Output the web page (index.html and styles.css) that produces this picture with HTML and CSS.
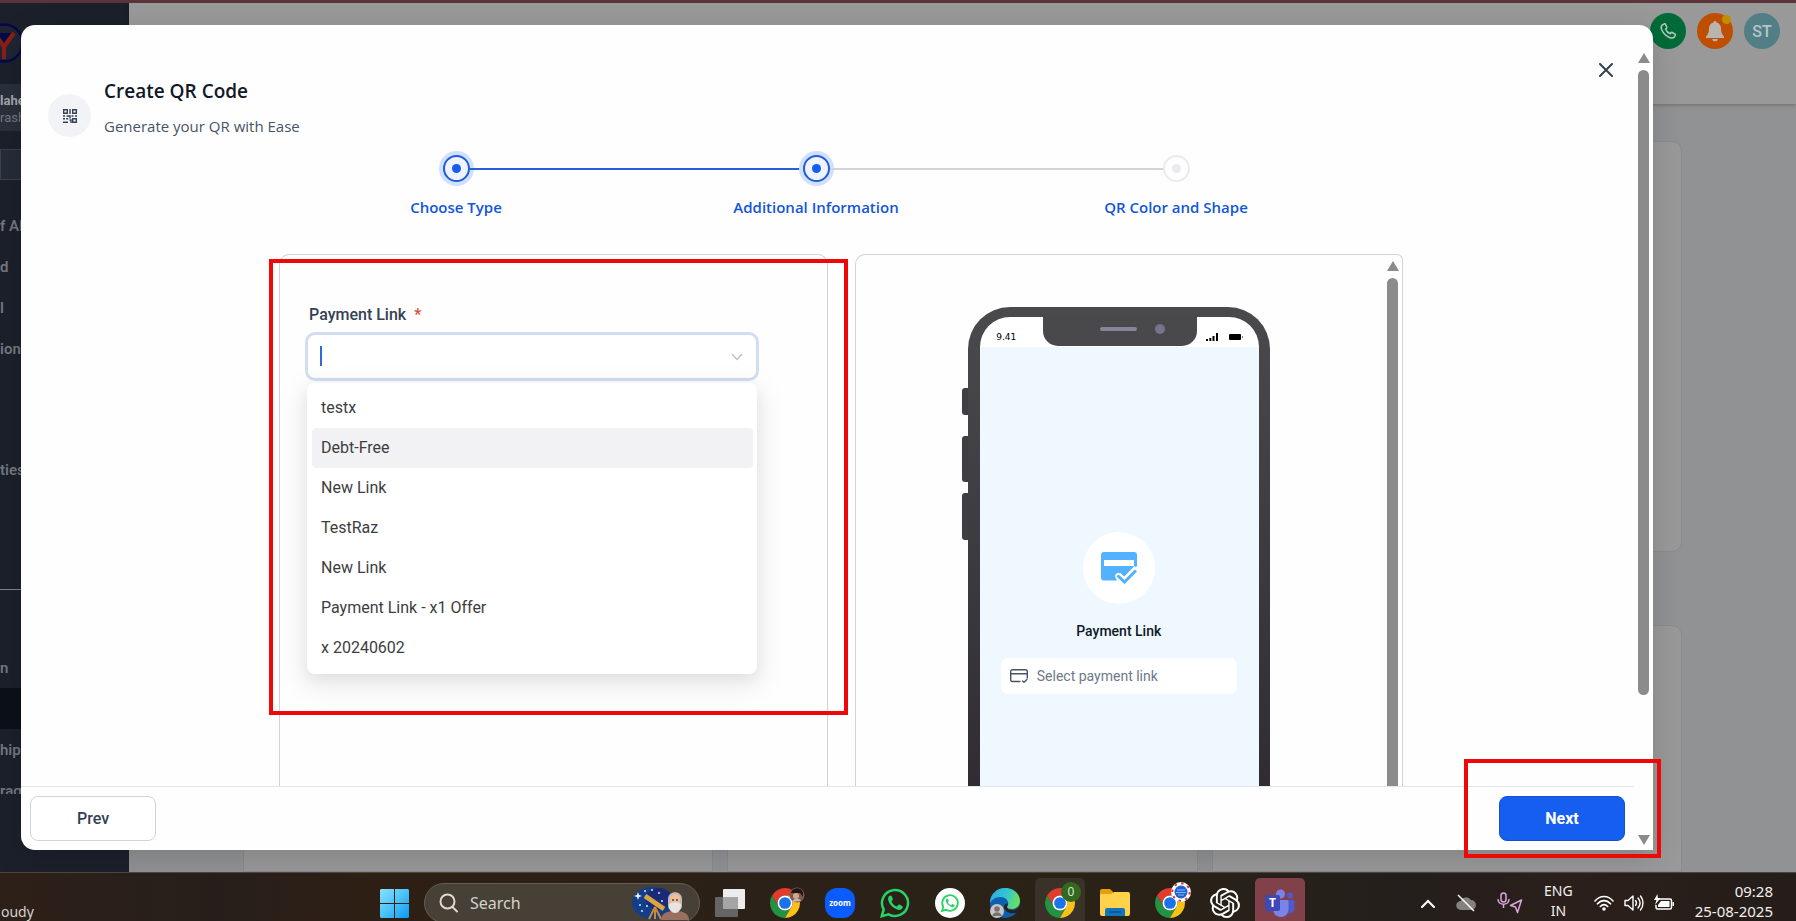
FILE: index.html
```html
<!DOCTYPE html>
<html lang="en">
<head>
    <meta charset="UTF-8">
    <meta name="viewport" content="width=device-width, initial-scale=1.0">
    <title>Create QR Code</title>
    <link rel="stylesheet" href="styles.css">
</head>
<body>

    <!-- shared icon -->
    <svg class="sprite" aria-hidden="true">
        <symbol id="chrome" viewBox="2 2 44 44">
            <path fill="#e33b2e" d="M4.95 13A22 22 0 0 1 43.05 13H24a11 11 0 0 0-9.5 16.5z"/>
            <path fill="#229342" d="M4.95 13A22 22 0 0 0 24 46l9.5-16.5a11 11 0 0 1-19 0z"/>
            <path fill="#fbc116" d="M43.05 13A22 22 0 0 1 24 46l9.5-16.5A11 11 0 0 0 24 13z"/>
            <circle cx="24" cy="24" r="11" fill="#fff"/>
            <circle cx="24" cy="24" r="8.6" fill="#1a73e8"/>
        </symbol>
    </svg>

    <div class="app">
        <aside class="sidebar">
            <svg class="sidebar-logo" viewBox="0 0 40 40" aria-hidden="true">
                <circle cx="20" cy="20" r="18.500" fill="#1f2532" stroke="#05094a" stroke-width="2.500"/>
                <path d="M13 10h14l-7 9z" fill="#05094a"/>
                <path d="M10 10l10 14L30 10M20 23v13" fill="none" stroke="#8c1d18" stroke-width="4"/>
            </svg>
            <div class="account">
                <strong>lahe</strong>
                <span>rash</span>
            </div>
            <div class="sidebar-search"></div>
            <ul class="menu">
                <li><a href="#">f AI</a></li>
                <li><a href="#">d</a></li>
                <li><a href="#">l</a></li>
                <li><a href="#">ions</a></li>
                <li class="spaced"><a href="#">ties</a></li>
            </ul>
            <ul class="menu menu-bottom">
                <li><a href="#">n</a></li>
                <li class="active"></li>
                <li><a href="#">hips</a></li>
                <li class="cut"><a href="#">rag</a></li>
            </ul>
        </aside>

        <main class="main">
            <div class="topbar">
                <button class="round green" aria-label="Call">
                    <svg width="20" height="20" viewBox="0 0 24 24" fill="none" stroke="#b4cdbf" stroke-width="1.800" stroke-linejoin="round"><path d="M7.500 3.500 5 5c-1.500 1-1.500 3-.500 5.500C6.500 15 10 18.500 14.500 20c2 .7 4 .5 5-.700l1.300-2.100c.3-.6.1-1.200-.4-1.500l-3.300-1.900c-.6-.3-1.200-.2-1.500.3l-.9 1.200c-2.600-.9-4.700-3.200-5.700-5.700l1.200-.9c.5-.4.600-1 .3-1.500L8.900 3.900c-.300-.500-.900-.7-1.400-.4z"/></svg>
                </button>
                <button class="round orange" aria-label="Notifications">
                    <svg width="20" height="22" viewBox="0 0 20 22" fill="#b9b4b0"><path d="M10 1c.9 0 1.500.6 1.500 1.500C14.500 3.200 16 5.500 16 8.500c0 4 1 6 3 8v1.500H1v-1.500c2-2 3-4 3-8 0-3 1.500-5.300 4.500-6C8.500 1.600 9.100 1 10 1zM7.300 19h5.400a2.700 2.300 0 0 1-5.400 0z"/></svg>
                    <span class="dot"></span>
                </button>
                <button class="round teal">ST</button>
            </div>
            <div class="page">
                <div class="tile wide"></div>
                <div class="tile"></div>
                <div class="tile"></div>
                <div class="tile"></div>
            </div>
        </main>

        <div class="overlay">
            <div class="modal" role="dialog" aria-labelledby="modal-title">
                <div class="modal-main">
                    <div class="modal-body">
                        <div class="modal-header">
                            <span class="qr-icon">
                                <svg width="14" height="14" viewBox="0 0 14 14" fill="none" stroke="#344054" stroke-width="1.400"><path d="M.7.7h3.600v3.600H.7zM9.700.7h3.600v3.600H9.700zM9.700 9.700h3.600v3.600H9.700zM7 0v5M0 7h2M3.500 7H7v2.500M8.500 7h2M12 7h2M0 9.700h2M3.200 9.700h2M0 13.300h5M6.500 11h1.500v3"/></svg>
                            </span>
                            <div class="modal-titles">
                                <h2 id="modal-title">Create QR Code</h2>
                                <p>Generate your QR with Ease</p>
                            </div>
                            <button class="close" aria-label="Close">
                                <svg width="14" height="14" viewBox="0 0 14 14" stroke="#344054" stroke-width="2" stroke-linecap="round"><path d="M1 1l12 12M13 1L1 13"/></svg>
                            </button>
                        </div>

                        <ol class="stepper">
                            <li class="step done">
                                <div class="step-rail"><i class="line"></i><span class="node"></span><i class="line"></i></div>
                                <span class="step-label">Choose Type</span>
                            </li>
                            <li class="step current">
                                <div class="step-rail"><i class="line"></i><span class="node"></span><i class="line"></i></div>
                                <span class="step-label">Additional Information</span>
                            </li>
                            <li class="step">
                                <div class="step-rail"><i class="line"></i><span class="node"></span><i class="line"></i></div>
                                <span class="step-label">QR Color and Shape</span>
                            </li>
                        </ol>

                        <div class="panels">
                            <form class="panel form-panel">
                                <label for="paymentLink">Payment Link <span class="required">*</span></label>
                                <div class="combo">
                                    <input type="text" id="paymentLink" role="combobox" aria-expanded="true" aria-controls="paymentOptions" autocomplete="off">
                                    <span class="caret"></span>
                                    <svg class="chevron" width="12" height="8" viewBox="0 0 12 8" fill="none" stroke="#bfbfbf" stroke-width="1.300"><path d="M1 1l5 5.500L11 1"/></svg>
                                    <select class="options" id="paymentOptions" size="7" aria-label="Payment links">
                                        <option>testx</option>
                                        <option selected>Debt-Free</option>
                                        <option>New Link</option>
                                        <option>TestRaz</option>
                                        <option>New Link</option>
                                        <option>Payment Link - x1 Offer</option>
                                        <option>x 20240602</option>
                                    </select>
                                </div>
                                <div class="mark mark-form"></div>
                            </form>

                            <div class="panel preview-panel">
                                <div class="preview">
                                    <div class="phone">
                                        <i class="side-key key-1"></i>
                                        <i class="side-key key-2"></i>
                                        <i class="side-key key-3"></i>
                                        <div class="screen">
                                            <div class="status-bar">
                                                <span class="phone-time">9.41</span>
                                                <div class="notch">
                                                    <i class="speaker"></i>
                                                    <i class="camera"></i>
                                                </div>
                                                <svg class="phone-status" width="38" height="10" viewBox="0 0 38 10"><path d="M1 7h2v2H1zM4.300 6h2v3h-2zM7.500 4h2v5h-2zM11 1h2v8h-2z"/><rect x="24" y="2" width="12" height="6" rx="1"/><path d="M37 4h1v2h-1z" fill="#777"/></svg>
                                            </div>
                                            <div class="screen-body">
                                                <span class="pay-icon">
                                                    <svg width="36" height="32" viewBox="0 0 36 32"><path fill="#53b1fd" d="M3 0h30a3 3 0 0 1 3 3v11l-12.500 12-4-4.200c-1.500-1.400-4-1-5 .700-.8 1.400-.4 2.800.5 3.800l1.200 2.200H3a3 3 0 0 1-3-3V3a3 3 0 0 1 3-3z"/><path fill="#fff" d="M3 8h30v6H3z"/><path fill="none" stroke="#fff" stroke-width="7" d="M17 23.500l6.500 6L36 16.500"/><path fill="none" stroke="#53b1fd" stroke-width="3" d="M16.500 23.500l7 6.500L35 18.500"/></svg>
                                                </span>
                                                <h3>Payment Link</h3>
                                                <div class="pay-field">
                                                    <svg width="18" height="14" viewBox="0 0 18 14" fill="none" stroke="#475467" stroke-width="1.400" stroke-linecap="round" stroke-linejoin="round"><path d="M10 12.500H2.500A1.800 1.800 0 0 1 .7 10.700V2.500A1.800 1.800 0 0 1 2.500.7h13a1.800 1.800 0 0 1 1.800 1.800V9M.7 4.700h16.600M12.500 12l1.500 1.300 3-2.700"/></svg>
                                                    <span>Select payment link</span>
                                                </div>
                                            </div>
                                        </div>
                                    </div>
                                </div>
                                <div class="scrollbar inner-scroll" aria-hidden="true">
                                    <i class="arrow up"></i>
                                    <i class="thumb"></i>
                                </div>
                            </div>
                        </div>
                    </div>

                    <div class="modal-footer">
                        <button class="btn">Prev</button>
                        <button class="btn btn-primary">Next</button>
                    </div>
                </div>

                <div class="scrollbar" aria-hidden="true">
                    <i class="arrow up"></i>
                    <i class="thumb"></i>
                    <i class="arrow down"></i>
                </div>
                <div class="mark mark-next"></div>
            </div>
        </div>
    </div>

    <div class="taskbar">
        <div class="taskbar-inner">
            <div class="weather">oudy</div>
            <div class="apps">
                <button class="task" aria-label="Start">
                    <svg width="29" height="29" viewBox="0 0 29 29">
                        <defs><linearGradient id="win" x1="0" y1="0" x2="1" y2="1"><stop offset="0" stop-color="#8be0fc"/><stop offset=".5" stop-color="#4cc3f8"/><stop offset="1" stop-color="#0a98f3"/></linearGradient></defs>
                        <path fill="url(#win)" d="M1 0h13v14H0V1zM15 0h13l1 1v13H15zM0 15h14v14H1l-1-1zM15 15h14v13l-1 1H15z"/>
                    </svg>
                </button>
                <div class="search">
                    <svg width="20" height="20" viewBox="0 0 20 20" fill="none" stroke="#dcd9d5" stroke-width="2" stroke-linecap="round"><circle cx="8.500" cy="8.500" r="7"/><path d="M13.500 14l4.500 4.500"/></svg>
                    <input type="text" placeholder="Search" aria-label="Search">
                    <svg width="60" height="34" viewBox="0 0 60 34">
                        <ellipse cx="21" cy="17" rx="20" ry="16" fill="#143d8a"/>
                        <ellipse cx="28" cy="13" rx="13" ry="11" fill="#182a78"/>
                        <path d="M7 6l1 3 3 1-3 1-1 3-1-3-3-1 3-1z" fill="#fff"/>
                        <g fill="#cfe4ff"><circle cx="14" cy="5" r="1"/><circle cx="21" cy="4" r="1"/><circle cx="9" cy="19" r="1"/><circle cx="16" cy="20" r="1"/><circle cx="28" cy="7" r="1"/><circle cx="11" cy="25" r="1"/><circle cx="31" cy="15" r="1"/></g>
                        <path d="M14 10l19 13" stroke="#d9a540" stroke-width="5"/>
                        <path d="M24 21l-6 12M24 21v12M24 21l6 12" stroke="#c88a2c" stroke-width="2"/>
                        <path d="M30 34c0-6 5-9 14-9s14 3 14 9z" fill="#9a6f61"/>
                        <path d="M37 13c0-9 14-9 14 0v7c0 7-14 7-14 0z" fill="#bdbab8"/>
                        <path d="M39 11c2-4 8-4 10 0v8H39z" fill="#eebd9c"/>
                        <path d="M41 14h2M45 14h2" stroke="#5b4136" stroke-width="1.500"/>
                        <path d="M38 18c3-2 9-2 12 0 1 12-13 12-12 0z" fill="#e6e3e1"/>
                    </svg>
                </div>
                <button class="task" aria-label="Task view">
                    <svg width="30" height="28" viewBox="0 0 30 28"><rect x="8" width="22" height="20" rx="1" fill="#ececec"/><rect y="8" width="23" height="20" rx="1" fill="#777" opacity=".8"/><path d="M8 8h15v12H8z" fill="#a5a5a5"/></svg>
                </button>
                <button class="task" aria-label="Chrome">
                    <svg width="30" height="30"><use href="#chrome"/></svg>
                    <svg class="badge-icon low" width="16" height="16" viewBox="0 0 16 16"><circle cx="8" cy="8" r="7.500" fill="#7b5b50"/><path d="M2 6c1-5 9-7 12-1v5l-3-4z" fill="#231716"/><circle cx="7" cy="9" r="3" fill="#d7a48e"/><path d="M3 15c1-4 8-4 9-1z" fill="#c7b8b5"/></svg>
                </button>
                <button class="task" aria-label="Zoom">
                    <svg width="30" height="30" viewBox="0 0 30 30"><rect width="30" height="30" rx="12" fill="#0b5cff"/><text x="15" y="18" text-anchor="middle" font-size="8" font-weight="700" fill="#fff">zoom</text></svg>
                </button>
                <button class="task" aria-label="WhatsApp">
                    <svg width="30" height="30" viewBox="0 0 30 30"><path fill="none" stroke="#25d366" stroke-width="2.500" d="M1.800 28.200l1.900-6.800A13 13 0 1 1 8.600 26.300z"/><path fill="#25d366" d="M10.800 7.600c-.9-.3-2.600.9-2.700 3-.2 4.900 5.900 11 11 11.300 2 .1 3.700-1.400 3.700-3 0-.8-3.400-2.500-4.100-2.300-.7.300-1.300 2-2 1.900-2.100-.6-4.600-3-5.200-4.900 0-.7 1.400-1.400 1.400-2.100 0-.8-1.200-3.600-2.100-3.900z"/></svg>
                </button>
                <button class="task" aria-label="WhatsApp Web">
                    <svg width="30" height="30" viewBox="0 0 30 30"><circle cx="15" cy="15" r="15" fill="#fff"/><g transform="translate(6 6) scale(.6)"><path fill="none" stroke="#25d366" stroke-width="3" d="M1.800 28.200l1.900-6.800A13 13 0 1 1 8.600 26.300z"/><path fill="#25d366" d="M10.800 7.600c-.9-.3-2.600.9-2.700 3-.2 4.900 5.900 11 11 11.300 2 .1 3.700-1.400 3.700-3 0-.8-3.400-2.500-4.100-2.300-.7.300-1.300 2-2 1.900-2.100-.6-4.600-3-5.200-4.900 0-.7 1.400-1.400 1.400-2.100 0-.8-1.200-3.600-2.100-3.900z"/></g></svg>
                </button>
                <button class="task" aria-label="Edge">
                    <svg width="30" height="30" viewBox="0 0 30 30">
                        <defs><linearGradient id="edge" x1="0" y1="0" x2="1" y2=".3"><stop offset="0" stop-color="#2aa7e8"/><stop offset=".6" stop-color="#35c6d0"/><stop offset="1" stop-color="#66dd63"/></linearGradient></defs>
                        <circle cx="15" cy="15" r="15" fill="#0f5fb0"/>
                        <path fill="url(#edge)" d="M0 15C0 6 7 0 15 0c9 0 15 6 15 13 0 5-4 8-8 8-3 0-5-1-5-2s2-2 1-5c-1-4-5-5-8-5-5 0-8 3-10 6z"/>
                        <path fill="#2b2217" d="M17 19c0 2 3 3.500 6.500 3 2.500-.4 4-1.500 5.300-3l1.200-2v8l-3-.5c-5 2-13 0-13-6 0-2 2-3 4-3 0 1.500-1 2.500-1 3.500z"/>
                        <circle cx="7" cy="23" r="7" fill="#c9c7c6"/><circle cx="7" cy="21" r="2.800" fill="#77716f"/><path d="M2.500 28c0-5 9-5 9 0z" fill="#77716f"/>
                    </svg>
                </button>
                <button class="task task-open" aria-label="Chrome, work profile">
                    <svg width="30" height="30"><use href="#chrome"/></svg>
                    <svg class="badge-icon" width="20" height="20" viewBox="0 0 20 20"><circle cx="10" cy="10" r="10" fill="#33691e"/><text x="10" y="14" text-anchor="middle" font-size="12" fill="#d7e3d0">0</text></svg>
                </button>
                <button class="task" aria-label="File Explorer">
                    <svg width="30" height="28" viewBox="0 0 30 28"><path fill="#e3a008" d="M0 2a2 2 0 0 1 2-2h8l3 3v6H0z"/><path fill="#ffd24a" d="M0 5h11l3-2h14a2 2 0 0 1 2 2v20a2 2 0 0 1-2 2H2a2 2 0 0 1-2-2z"/><path fill="#1274bd" d="M5 27v-6a2 2 0 0 1 2-2h16a2 2 0 0 1 2 2v6z"/><path d="M9 23h12" stroke="#0b4f8c" stroke-width="1.500"/></svg>
                </button>
                <button class="task" aria-label="Chrome, personal profile">
                    <svg width="30" height="30"><use href="#chrome"/></svg>
                    <svg class="badge-icon" width="20" height="20" viewBox="0 0 20 20"><circle cx="10" cy="10" r="10" fill="#fff"/><circle cx="10" cy="10" r="8.700" fill="none" stroke="#d63a3a" stroke-width="2" stroke-dasharray="2.500 4.300"/><circle cx="10" cy="10" r="6.500" fill="#1d62d1"/><path d="M6 8h8M5 10.500h10M7 13h6" stroke="#8fb8f2"/></svg>
                </button>
                <button class="task" aria-label="ChatGPT">
                    <svg width="30" height="30" viewBox="0 0 24 24" fill="#fff"><path d="M22.2819 9.8211a5.9847 5.9847 0 0 0-.5157-4.9108 6.0462 6.0462 0 0 0-6.5098-2.9A6.0651 6.0651 0 0 0 4.9807 4.1818a5.9847 5.9847 0 0 0-3.9977 2.9 6.0462 6.0462 0 0 0 .7427 7.0966 5.98 5.98 0 0 0 .511 4.9107 6.051 6.051 0 0 0 6.5146 2.9001A5.9847 5.9847 0 0 0 13.2599 24a6.0557 6.0557 0 0 0 5.7718-4.2058 5.9894 5.9894 0 0 0 3.9977-2.9001 6.0557 6.0557 0 0 0-.7475-7.0729zm-9.022 12.6081a4.4755 4.4755 0 0 1-2.8764-1.0408l.1419-.0804 4.7783-2.7582a.7948.7948 0 0 0 .3927-.6813v-6.7369l2.02 1.1686a.071.071 0 0 1 .038.052v5.5826a4.504 4.504 0 0 1-4.4945 4.4944zm-9.6607-4.1254a4.4708 4.4708 0 0 1-.5346-3.0137l.142.0852 4.783 2.7582a.7712.7712 0 0 0 .7806 0l5.8428-3.3685v2.3324a.0804.0804 0 0 1-.0332.0615L9.74 19.9502a4.4992 4.4992 0 0 1-6.1408-1.6464zM2.3408 7.8956a4.485 4.485 0 0 1 2.3655-1.9728V11.6a.7664.7664 0 0 0 .3879.6765l5.8144 3.3543-2.0201 1.1685a.0757.0757 0 0 1-.071 0l-4.8303-2.7865A4.504 4.504 0 0 1 2.3408 7.872zm16.5963 3.8558L13.1038 8.364 15.1192 7.2a.0757.0757 0 0 1 .071 0l4.8303 2.7913a4.4944 4.4944 0 0 1-.6765 8.1042v-5.6772a.79.79 0 0 0-.407-.667zm2.0107-3.0231l-.142-.0852-4.7735-2.7818a.7759.7759 0 0 0-.7854 0L9.409 9.2297V6.8974a.0662.0662 0 0 1 .0284-.0615l4.8303-2.7866a4.4992 4.4992 0 0 1 6.6802 4.66zM8.3065 12.863l-2.02-1.1638a.0804.0804 0 0 1-.038-.0567V6.0742a4.4992 4.4992 0 0 1 7.3757-3.4537l-.142.0805L8.704 5.459a.7948.7948 0 0 0-.3927.6813zm1.0976-2.3654l2.602-1.4998 2.6069 1.4998v2.9994l-2.5974 1.4997-2.6067-1.4997Z"/></svg>
                </button>
                <button class="task task-alert" aria-label="Teams">
                    <svg width="30" height="28" viewBox="0 0 30 28"><circle cx="15.500" cy="5" r="4.500" fill="#7b83eb"/><circle cx="25" cy="6.500" r="3" fill="#5059c9"/><path fill="#5059c9" d="M20 11h8a1.500 1.500 0 0 1 1.500 1.500V19c0 4-3 6-6.500 5.500z"/><path fill="#7b83eb" d="M9 11h13a1.500 1.500 0 0 1 1.500 1.500V20c0 5-3.500 8-7.500 8s-8-3-8-8z"/><rect y="6" width="15" height="16" rx="2" fill="#4048b4"/><text x="7.500" y="18" text-anchor="middle" font-size="12" font-weight="700" fill="#fff">T</text></svg>
                </button>
            </div>

            <div class="tray">
                <svg width="14" height="9" viewBox="0 0 14 9" fill="none" stroke="#fff" stroke-width="2" stroke-linecap="round"><path d="M1 8l6-6 6 6"/></svg>
                <svg width="20" height="18" viewBox="0 0 20 18"><path fill="#85817e" d="M5 16a4.500 4.500 0 0 1-.5-9A6 6 0 0 1 15 6a5 5 0 0 1 0 10z"/><path d="M2 1l16 16" stroke="#fff" stroke-width="1.500"/></svg>
                <svg width="26" height="22" viewBox="0 0 26 22" fill="none" stroke="#d9a5dc" stroke-width="1.500" stroke-linejoin="round"><rect x="4" y="1" width="5" height="9" rx="2.500"/><path d="M1 7c0 7 11 7 11 0M6.500 12.500V16M24.500 8l-11 5.500 5 1.500 2 5.500z"/></svg>
                <div class="lang">ENG<br>IN</div>
                <div class="status-icons">
                    <svg width="20" height="16" viewBox="0 0 20 16" fill="none" stroke="#fff" stroke-width="1.600" stroke-linecap="round"><path d="M1 6c5-6 13-6 18 0M3.500 8.800c4-4.300 9-4.300 13 0M6.300 11.500c2.500-2.500 5-2.500 7.400 0"/><circle cx="10" cy="14" r="1" fill="#fff"/></svg>
                    <svg width="20" height="18" viewBox="0 0 20 18" fill="none" stroke="#fff" stroke-width="1.400" stroke-linecap="round" stroke-linejoin="round"><path d="M1 6.500h3l5-4.500v14l-5-4.500H1zM11.500 6.500c1.200 1.500 1.200 3.500 0 5M14 4c2.500 3 2.500 7 0 10M16.500 2c3.300 4 3.300 10 0 14"/></svg>
                    <svg width="20" height="18" viewBox="0 0 20 18"><path d="M5 5h11a1.500 1.500 0 0 1 1.500 1.500v7A1.500 1.500 0 0 1 16 15H3.500A1.500 1.500 0 0 1 2 13.500V11" fill="none" stroke="#fff" stroke-width="1.500"/><path fill="#fff" d="M7 7h8.500v6H4v-2zM18.500 8h1.500v4h-1.500zM3.500 0L0 6h2.500L1 11l5.500-7H3.800z"/></svg>
                </div>
                <div class="clock">09:28<br>25-08-2025</div>
            </div>
        </div>
    </div>

</body>
</html>
```

FILE: styles.css
```css
* {
    box-sizing: border-box;
}

body {
    margin: 0;
    height: 100vh;
    display: flex;
    flex-direction: column;
    overflow: hidden;
    border-top: 3px solid #5a3439;
    font-family: Roboto, "Liberation Sans", sans-serif;
    font-size: 16px;
    color: #344054;
}

button {
    font-family: inherit;
    padding: 0;
    border: none;
    cursor: pointer;
}

svg {
    display: block;
    flex: none;
}

.sprite {
    position: absolute;
    width: 0;
    height: 0;
}

/* Page behind the dialog */
.app {
    flex: 1;
    min-height: 0;
    display: flex;
    position: relative;
    overflow: hidden;
}

.sidebar {
    width: 129px;
    background: #1b202b;
    overflow: hidden;
    color: #74777e;
}

.sidebar-logo {
    width: 40px;
    height: 40px;
    margin: 20px 0 21px -16px;
}

.account {
    height: 47px;
    padding-top: 8px;
    background: #2a303b;
    display: flex;
    flex-direction: column;
    font-size: 13px;
    line-height: 17px;
}

.account strong {
    color: #a3a5a9;
}

.sidebar-search {
    height: 31px;
    margin: 18px 0 25px;
    background: #262c37;
    border: 1px solid #3b414b;
}

.menu {
    list-style: none;
    margin: 0;
    padding: 0;
}

.menu li {
    height: 41px;
    line-height: 41px;
}

.menu a {
    color: inherit;
    text-decoration: none;
    font-size: 15px;
    font-weight: 600;
}

.menu .spaced {
    margin-top: 80px;
}

.menu .active {
    background: #0c1018;
}

.menu .cut {
    height: 24px;
    overflow: hidden;
}

.menu-bottom {
    margin-top: 99px;
    border-top: 1px solid #7f8389;
    padding-top: 57px;
}

.main {
    flex: 1;
    display: flex;
    flex-direction: column;
    background: #919294;
}

.topbar {
    height: 101px;
    display: flex;
    justify-content: flex-end;
    gap: 11px;
    padding: 10px 16px 0;
    background: #999;
    box-shadow: 0 1px 4px rgba(0, 0, 0, 0.25);
}

.round {
    position: relative;
    width: 36px;
    height: 36px;
    display: flex;
    align-items: center;
    justify-content: center;
    border-radius: 50%;
    font-size: 16px;
    font-weight: 500;
    color: #b5c4c8;
}

.green { background: #006b38; }
.orange { background: #bf4f00; }
.teal { background: #527f86; }

.dot {
    position: absolute;
    top: 2px;
    right: 2px;
    width: 9px;
    height: 9px;
    border-radius: 50%;
    background: #c08f00;
}

.page {
    flex: 1;
    display: grid;
    grid-template-columns: repeat(3, 1fr);
    grid-template-rows: 411px 1fr;
    gap: 73px 14px;
    padding: 37px 114px 0;
}

.tile {
    background: #999;
    border: 1px solid #8a8b90;
    border-radius: 10px 10px 0 0;
}

.tile.wide {
    grid-column: 1 / -1;
    border-radius: 10px;
}

/* Dialog */
.overlay {
    position: absolute;
    inset: 0;
    display: flex;
    padding: 22px 143px 22px 21px;
}

.modal {
    position: relative;
    flex: 1;
    display: flex;
    background: #fefefe;
    border-radius: 14px 14px 0 14px;
    box-shadow: 0 8px 30px rgba(0, 0, 0, 0.15);
}

.modal-main {
    flex: 1;
    min-width: 0;
    display: flex;
    flex-direction: column;
}

.modal-body {
    flex: 1;
    min-height: 0;
    display: flex;
    flex-direction: column;
    overflow: hidden;
}

.modal-header {
    display: flex;
    align-items: flex-start;
    gap: 13px;
    padding: 32px 15px 1px 27px;
}

.qr-icon {
    width: 43px;
    height: 43px;
    margin-top: 37px;
    display: flex;
    align-items: center;
    justify-content: center;
    border-radius: 50%;
    background: #f2f3f7;
}

.modal-titles {
    padding-top: 19px;
    font-family: "Open Sans", "Noto Sans", sans-serif;
}

.modal-titles h2 {
    margin: 0 0 8px;
    font-size: 19px;
    line-height: 30px;
    font-weight: 600;
    color: #101828;
}

.modal-titles p {
    margin: 0;
    font-size: 15px;
    line-height: 24px;
    color: #475467;
}

.close {
    width: 26px;
    height: 26px;
    margin-left: auto;
    display: flex;
    align-items: center;
    justify-content: center;
    background: none;
}

.stepper {
    list-style: none;
    margin: 16px 278px 0 255px;
    padding: 0;
    display: flex;
}

.step {
    flex: 1;
    text-align: center;
}

.step-rail {
    display: flex;
    align-items: center;
    margin-bottom: 13px;
}

.line {
    flex: 1;
    height: 2px;
    background: #d3d4db;
}

.step.done .line,
.step.current .line:first-child {
    background: #2460d8;
}

.step:first-child .line:first-child,
.step:last-child .line:last-child {
    background: none;
}

.node {
    width: 27px;
    height: 27px;
    display: flex;
    align-items: center;
    justify-content: center;
    border: 2px solid #eaebef;
    border-radius: 50%;
    background: #fefefe;
}

.node::after {
    content: "";
    width: 9px;
    height: 9px;
    border-radius: 50%;
    background: #eaebef;
}

.done .node,
.current .node {
    border-color: #1f5cd6;
    background: #eef3ff;
    box-shadow: 0 0 0 4px #d1e0ff;
}

.done .node::after,
.current .node::after {
    background: #155eef;
}

.step-label {
    display: block;
    font-family: "Open Sans", "Noto Sans", sans-serif;
    font-size: 15px;
    line-height: 24px;
    font-weight: 600;
    color: #1556d6;
}

.panels {
    flex: 1;
    display: grid;
    grid-template-columns: 1fr 1fr;
    gap: 27px;
    margin: 35px 231px 0 258px;
    min-height: 0;
}

.panel {
    position: relative;
    min-height: 0;
    border: 1px solid #d2d3da;
    border-bottom: none;
    border-radius: 10px 10px 0 0;
}

.form-panel {
    padding: 50px 70px 0 27px;
}

.form-panel label {
    display: block;
    margin-bottom: 9px;
    padding-left: 2px;
    line-height: 20px;
    font-weight: 500;
}

.required {
    margin-left: 4px;
    color: #e0483e;
}

.combo {
    position: relative;
}

.combo input {
    display: block;
    width: 100%;
    height: 45px;
    padding: 0 40px 0 12px;
    border: 1px solid #d0dcf4;
    border-radius: 8px;
    outline: none;
    background: #fff;
    box-shadow: 0 0 0 2px #d3def5;
    font-family: inherit;
    font-size: 16px;
}

.caret {
    position: absolute;
    left: 13px;
    top: 12px;
    width: 2px;
    height: 20px;
    background: #2f6bd8;
}

.chevron {
    position: absolute;
    right: 14px;
    top: 19px;
}

/* Open list under the field */
.options {
    appearance: none;
    position: absolute;
    top: calc(100% + 4px);
    left: 0;
    width: 100%;
    height: 291px;
    margin: 0;
    padding: 5px 4px 5px 5px;
    border: none;
    border-radius: 8px;
    outline: none;
    overflow: hidden;
    background: #fff;
    box-shadow: 0 6px 16px rgba(0, 0, 0, 0.08), 0 9px 28px 8px rgba(0, 0, 0, 0.05);
    font-family: inherit;
    font-size: 16px;
}

.options option {
    height: 40px;
    min-height: 40px;
    padding: 10px 9px;
    border-radius: 4px;
    color: #3d3d3f;
}

.options option:checked {
    background: #f2f2f4;
    color: #3d3d3f;
}

.mark {
    position: absolute;
    border: 4px solid #ee0808;
    pointer-events: none;
}

.mark-form {
    top: 4px;
    left: -11px;
    right: -21px;
    height: 456px;
}

.mark-next {
    right: -8px;
    bottom: -8px;
    width: 197px;
    height: 99px;
}

/* Phone preview */
.preview-panel {
    display: flex;
    border-radius: 10px 6px 0 0;
    overflow: hidden;
}

.preview {
    flex: 1;
    display: flex;
    justify-content: center;
    padding-top: 52px;
}

.phone {
    position: relative;
    width: 302px;
    display: flex;
    padding: 10px 11px 0 12px;
    border-radius: 42px 42px 0 0;
    background: linear-gradient(#4a494c, #2f2d32);
}

.side-key {
    position: absolute;
    left: -6px;
    width: 6px;
    border-radius: 3px 0 0 3px;
    background: #3f3e42;
}

.key-1 { top: 81px; height: 27px; }
.key-2 { top: 129px; height: 46px; }
.key-3 { top: 186px; height: 47px; }

.screen {
    flex: 1;
    display: flex;
    flex-direction: column;
}

.status-bar {
    height: 30px;
    display: flex;
    justify-content: space-between;
    padding: 0 16px;
    border-radius: 32px 32px 0 0;
    background: #fff;
}

.phone-time {
    width: 38px;
    padding-top: 14px;
    font-family: "DejaVu Sans", sans-serif;
    font-size: 9px;
    line-height: 12px;
    color: #000;
}

.notch {
    width: 154px;
    height: 29px;
    display: flex;
    align-items: center;
    gap: 18px;
    padding: 0 32px 6px 57px;
    border-radius: 0 0 15px 15px;
    background: #49484b;
}

.speaker {
    width: 37px;
    height: 4px;
    border-radius: 2px;
    background: #86859a;
}

.camera {
    width: 10px;
    height: 10px;
    border-radius: 50%;
    background: #75748a;
}

.phone-status {
    margin-top: 15px;
}

.screen-body {
    flex: 1;
    display: flex;
    flex-direction: column;
    align-items: center;
    padding: 185px 2px 0 0;
    background: #eff8ff;
}

.pay-icon {
    width: 72px;
    height: 72px;
    display: flex;
    align-items: center;
    justify-content: center;
    border-radius: 50%;
    background: #fff;
}

.screen-body h3 {
    margin: 17px 0;
    font-size: 14px;
    line-height: 20px;
    font-weight: 500;
    color: #101828;
}

.pay-field {
    width: 236px;
    height: 36px;
    display: flex;
    align-items: center;
    gap: 9px;
    padding: 0 9px;
    border-radius: 7px;
    background: #fff;
    font-size: 14px;
    color: #6f7889;
}

/* Scroll bars */
.scrollbar {
    width: 19px;
    display: flex;
    flex-direction: column;
    align-items: center;
    gap: 7px;
    padding: 28px 0 5px;
}

.inner-scroll {
    padding: 6px 0 0;
}

.arrow {
    border: 6px solid transparent;
    border-top: none;
    border-bottom: 10px solid #8b8b8b;
}

.arrow.down {
    margin-top: auto;
    border-top: 10px solid #8b8b8b;
    border-bottom: none;
}

.thumb {
    width: 11px;
    height: 625px;
    border-radius: 6px;
    background: #8b8b8b;
}

.inner-scroll .thumb {
    flex: 1;
    border-radius: 6px 6px 0 0;
}

.modal-footer {
    display: flex;
    justify-content: space-between;
    padding: 9px;
    border-top: 1px solid #e1e4e8;
}

.btn {
    width: 126px;
    height: 45px;
    border: 1px solid #d0d3dc;
    border-radius: 8px;
    background: #fff;
    font-size: 16px;
    font-weight: 500;
    color: #344054;
}

.btn-primary {
    border-color: #1250cc;
    background: #155eef;
    font-weight: 700;
    color: #fff;
}

/* Taskbar */
.taskbar {
    height: 49px;
    overflow: hidden;
    border-top: 1px solid #4c443f;
    background: linear-gradient(90deg, #2d2018, #271e1b 12%, #2e1f14 20%, #2b2118 45%, #2a2217 65%, #241f1c 78%, #2b1f1b 88%, #241d19);
    font-family: "Noto Sans", sans-serif;
    font-size: 15px;
    line-height: 20px;
    color: #f2f0ee;
}

.taskbar-inner {
    height: 60px;
    display: flex;
    align-items: center;
}

.weather {
    width: 369px;
    padding: 18px 0 0 1px;
    font-size: 14px;
    color: #d5d2cf;
}

.apps {
    display: flex;
    align-items: center;
    gap: 5px;
}

.task {
    position: relative;
    width: 50px;
    height: 50px;
    display: flex;
    align-items: center;
    justify-content: center;
    border-radius: 5px;
    background: none;
}

.task-open { background: #3a3129; }
.task-alert { background: #80414a; }

.badge-icon {
    position: absolute;
    top: 4px;
    right: 4px;
}

.badge-icon.low {
    top: 9px;
    right: 5px;
}

.search {
    width: 276px;
    height: 40px;
    display: flex;
    align-items: center;
    gap: 11px;
    padding: 0 8px 0 14px;
    border: 1px solid #655d54;
    border-radius: 20px;
    background: #474037;
}

.search input {
    flex: 1;
    min-width: 0;
    padding: 0;
    border: none;
    outline: none;
    background: none;
    font-family: inherit;
    font-size: 16px;
    color: inherit;
}

.search input::placeholder {
    color: #d5d2cd;
}

.tray {
    margin-left: auto;
    padding-right: 23px;
    display: flex;
    align-items: center;
    gap: 21px;
}

.lang {
    padding-bottom: 4px;
    font-size: 14px;
    text-align: center;
}

.status-icons {
    display: flex;
    align-items: center;
    gap: 10px;
}

.clock {
    padding-bottom: 4px;
    text-align: right;
}
```
